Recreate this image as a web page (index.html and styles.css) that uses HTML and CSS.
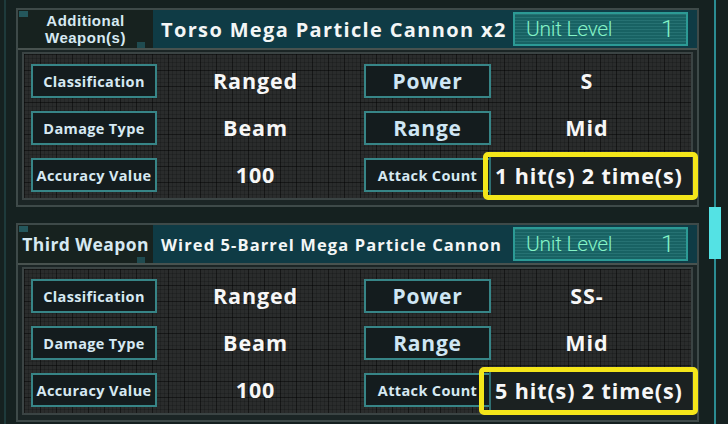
FILE: index.html
```html
<!DOCTYPE html>
<html>
<head>
<meta charset="utf-8">
<link rel="stylesheet" href="styles.css">
</head>
<body>
<div class="screen">
  <div class="rail"></div>
  <div class="content">
    <section class="panel">
      <div class="head">
        <div class="kind two-line"><span>Additional</span><span>Weapon(s)</span></div>
        <div class="titlebar">
          <div class="title">Torso Mega Particle Cannon x2</div>
          <div class="unit"><span>Unit Level</span><span class="lv">1</span></div>
        </div>
      </div>
      <div class="body">
        <div class="lbl">Classification</div><div class="val">Ranged</div>
        <div class="lbl big">Power</div><div class="val v2">S</div>
        <div class="lbl">Damage Type</div><div class="val">Beam</div>
        <div class="lbl big">Range</div><div class="val v2">Mid</div>
        <div class="lbl">Accuracy Value</div><div class="val">100</div>
        <div class="lbl">Attack Count</div><div class="val v2 hl"><span>1 hit(s) 2 time(s)</span></div>
      </div>
    </section>
    <section class="panel second">
      <div class="head">
        <div class="kind">Third Weapon</div>
        <div class="titlebar">
          <div class="title small">Wired 5-Barrel Mega Particle Cannon</div>
          <div class="unit"><span>Unit Level</span><span class="lv">1</span></div>
        </div>
      </div>
      <div class="body">
        <div class="lbl">Classification</div><div class="val">Ranged</div>
        <div class="lbl big">Power</div><div class="val v2">SS-</div>
        <div class="lbl">Damage Type</div><div class="val">Beam</div>
        <div class="lbl big">Range</div><div class="val v2">Mid</div>
        <div class="lbl">Accuracy Value</div><div class="val">100</div>
        <div class="lbl">Attack Count</div><div class="val v2 hl wide"><span>5 hit(s) 2 time(s)</span></div>
      </div>
    </section>
  </div>
  <div class="scroll"><div class="thumb"></div></div>
</div>
</body>
</html>
```
FILE: styles.css
```css
html, body {
  margin: 0;
  padding: 0;
}
body {
  width: 728px;
  height: 424px;
  overflow: hidden;
  background: #152120;
  font-family: "Open Sans", "DejaVu Sans", sans-serif;
}
.screen {
  display: flex;
  height: 424px;
}
.rail {
  width: 2px;
  margin-left: 4px;
  background: #1e3a3b;
  margin-right: 10px;
}
.content {
  width: 683px;
  padding-top: 8px;
}
.panel {
  border: 2px solid #3e4a49;
  background: #1b2525;
}
.panel.second {
  margin-top: 16px;
}
.head {
  display: flex;
  height: 38px;
  border-bottom: 2px solid #48524f;
}
.kind {
  position: relative;
  width: 135px;
  background: #17221f;
  color: #d6e9f2;
  font-weight: 700;
  font-size: 17.5px;
  letter-spacing: 0.4px;
  display: flex;
  align-items: center;
  justify-content: center;
  text-align: center;
  white-space: nowrap;
}
.kind.two-line {
  flex-direction: column;
  font-family: "Liberation Sans", Arial, sans-serif;
  font-size: 15px;
  line-height: 17.5px;
  letter-spacing: 0.5px;
}
.kind::before {
  content: "";
  position: absolute;
  left: 1px;
  top: 1px;
  width: 9px;
  height: 6px;
  background: #24575c;
}
.kind::after {
  content: "";
  position: absolute;
  right: 8px;
  bottom: 0;
  width: 8px;
  height: 6px;
  background: #1f4b50;
}
.titlebar {
  flex: 1;
  display: flex;
  align-items: center;
  background: #0f3b45;
  padding-left: 8px;
}
.title {
  flex: 1;
  color: #f3f6f6;
  font-weight: 700;
  font-size: 20px;
  letter-spacing: 1.35px;
  white-space: nowrap;
}
.title.small {
  font-size: 16.5px;
  letter-spacing: 1.1px;
}
.unit {
  width: 175px;
  height: 34px;
  margin-right: 9px;
  border: 2px solid #2c9a95;
  background-color: #1a6a6b;
  background-image: repeating-linear-gradient(180deg, rgba(255,255,255,0.05) 0 1px, rgba(0,0,0,0.08) 1px 3px);
  display: flex;
  align-items: center;
  justify-content: space-between;
  padding: 0 12px 0 11px;
  box-sizing: border-box;
  color: #84f3c6;
  font-family: Roboto, "Liberation Sans", sans-serif;
  font-weight: 300;
  font-size: 21px;
  letter-spacing: -0.3px;
}
.unit .lv {
  font-size: 24px;
}
.body {
  position: relative;
  margin: 2px 4px 5px 4px;
  border: 2px solid #3b4444;
  background-color: #2a2c2c;
  background-image:
    linear-gradient(90deg, rgba(0,0,0,0.38) 1px, transparent 1px),
    linear-gradient(180deg, rgba(0,0,0,0.38) 1px, transparent 1px),
    linear-gradient(90deg, rgba(0,0,0,0.16) 1px, transparent 1px),
    linear-gradient(180deg, rgba(0,0,0,0.16) 1px, transparent 1px);
  background-size: 16px 16px, 16px 16px, 4px 4px, 4px 4px;
  display: grid;
  grid-template-columns: 126px 207px 127px 1fr;
  grid-auto-rows: 34px;
  row-gap: 13px;
  padding: 10px 3px 6px 7px;
}
.lbl {
  box-sizing: border-box;
  border: 2px solid #378587;
  background: #141c1e;
  color: #d6e9f2;
  font-weight: 700;
  font-size: 14.5px;
  letter-spacing: 0.35px;
  display: flex;
  align-items: center;
  justify-content: center;
  white-space: nowrap;
  overflow: hidden;
}
.lbl.big {
  font-size: 21px;
  letter-spacing: 0.8px;
  color: #cfe6f4;
}
.val {
  color: #f7f7f7;
  font-weight: 700;
  font-size: 21.5px;
  letter-spacing: 0.9px;
  display: flex;
  align-items: center;
  justify-content: center;
  padding-right: 10px;
  padding-bottom: 2px;
  white-space: nowrap;
}
.val.v2 {
  padding-right: 8px;
}
.hl {
  position: relative;
  padding-right: 0;
  padding-bottom: 0;
}
.hl::before {
  content: "";
  position: absolute;
  left: -2px;
  right: -1px;
  top: -2px;
  bottom: -4px;
  background: #1b2121;
  border-left: 2px solid #2f6f72;
}
.hl::after {
  content: "";
  position: absolute;
  left: -8px;
  right: -7px;
  top: -6px;
  bottom: -8px;
  border: 5px solid #f4e61a;
  border-radius: 5px;
}
.hl.wide::after {
  left: -12px;
}
.hl span {
  position: relative;
  z-index: 1;
  padding-left: 4px;
}
.scroll {
  position: relative;
  width: 2px;
  margin-left: 15px;
  background: #2b8c92;
}
.thumb {
  position: absolute;
  left: -5px;
  top: 207px;
  width: 12px;
  height: 52px;
  background: #54e2e4;
}
```
